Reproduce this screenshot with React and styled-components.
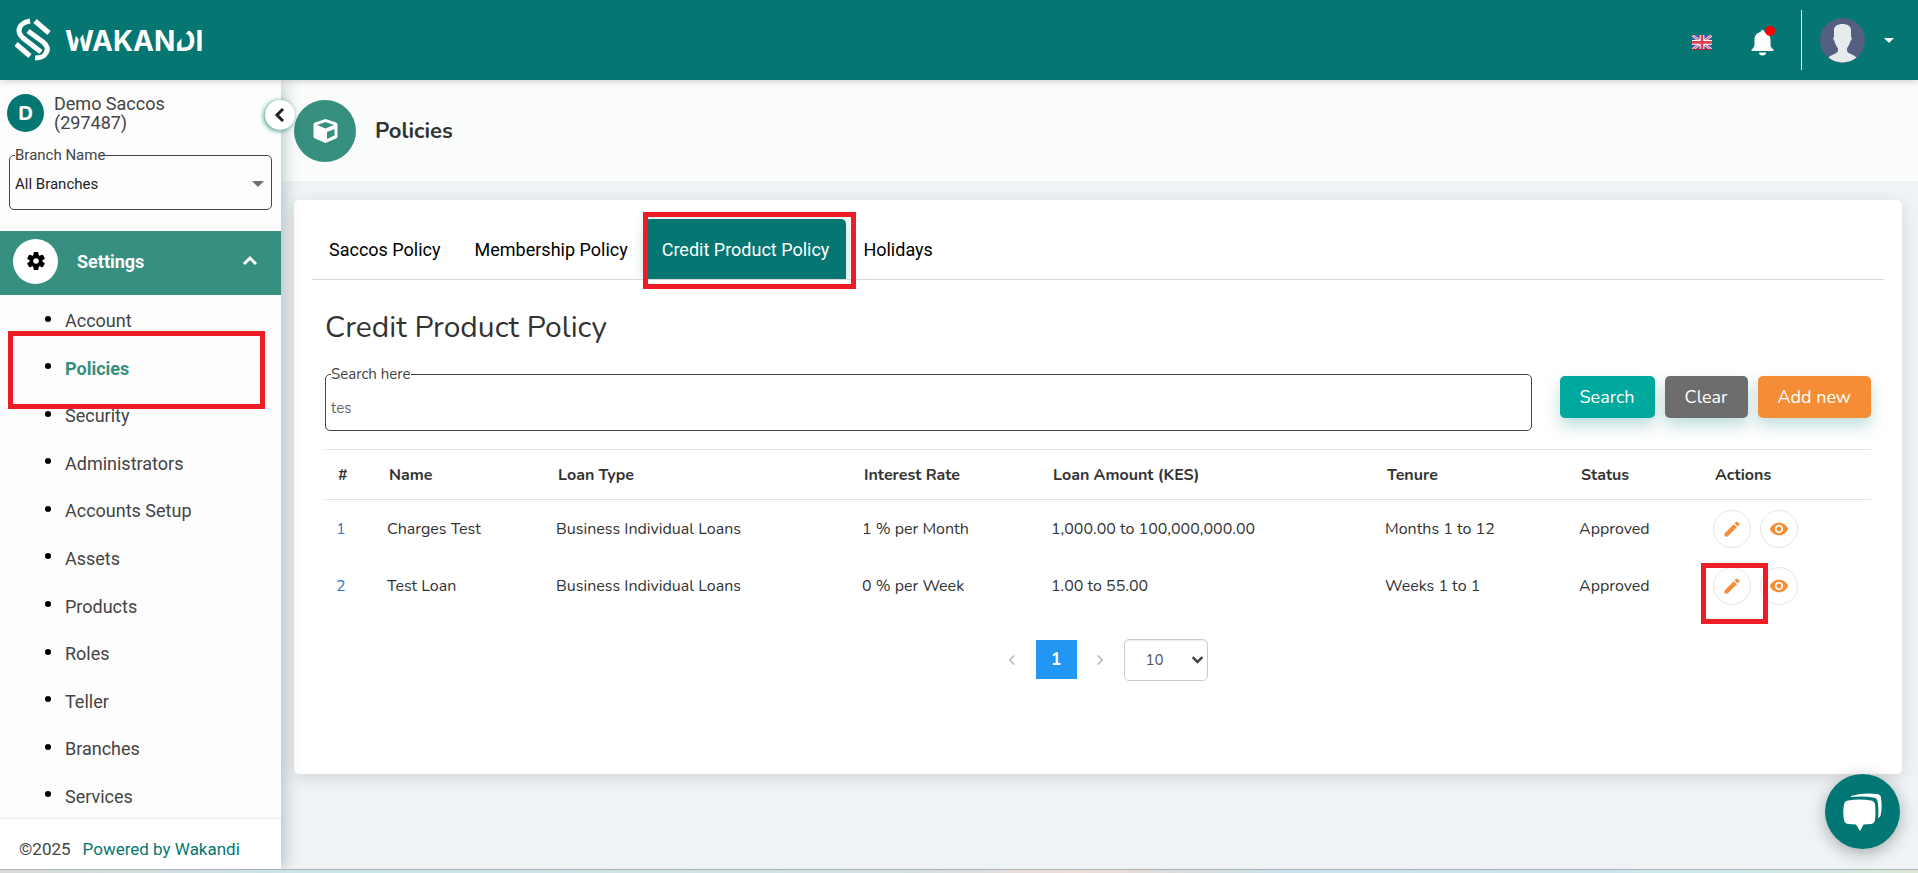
import React from "react";
import styled, { createGlobalStyle } from "styled-components";
import { MdEdit, MdVisibility } from "react-icons/md";

const vary = {
	teal: "#057672",
	green: "#368f7f",
	mint: "#00a99d",
	orange: "#f58c36",
	grey: "#6d6d6d",
	fontColor: "#333333",
	border: "#e4e4e4",
	red: "#ee1c25",
	nunito: `Nunito, "Open Sans", "Noto Sans", sans-serif`,
	roboto: `Roboto, sans-serif`,
};

const GlobalStyles = createGlobalStyle`
	*, *::before, *::after {
		box-sizing: border-box;
	}
	body {
		margin: 0;
		background-color: #eff3f6;
		color: ${vary.fontColor};
		font-family: ${vary.nunito};
		font-size: 16px;
	}
	a {
		text-decoration: none;
	}
	button, input, select {
		font-family: inherit;
	}
`;

const Page = styled.div`
	display: grid;
	grid-template-rows: 80px 1fr 4px;
	min-height: 100vh;
`;

const Header = styled.header`
	display: flex;
	align-items: center;
	padding: 0 20px 0 15px;
	background-color: ${vary.teal};
	box-shadow: 0 1px 8px rgba(0, 0, 0, 0.2);
	z-index: 3;
`;
const LogoLink = styled.a`
	display: flex;
	margin-right: auto;
`;
const FlagButton = styled.button`
	display: flex;
	padding: 0;
	margin: 5px 39px 0 0;
	border: none;
	background: none;
`;
const BellButton = styled(FlagButton)`
	position: relative;
	margin: 6px 27px 0 0;
`;
const BellDot = styled.span`
	position: absolute;
	top: -4px;
	right: -1px;
	width: 10px;
	height: 10px;
	border-radius: 50%;
	background-color: #ff0000;
`;
const UserButton = styled.button`
	display: flex;
	align-items: center;
	gap: 19px;
	height: 60px;
	padding: 0 5px 0 18px;
	border: none;
	border-left: 1px solid #ffffff;
	background: none;
`;

const Body = styled.div`
	display: flex;
	min-height: 0;
`;

const Sidebar = styled.aside`
	position: relative;
	display: flex;
	flex-direction: column;
	flex: 0 0 281px;
	background-color: #fdfdfd;
	box-shadow: 2px 0 16px rgba(0, 40, 50, 0.28);
	font-family: ${vary.roboto};
	z-index: 2;
`;
const CollapseButton = styled.button`
	position: absolute;
	top: 20px;
	right: -14px;
	display: flex;
	align-items: center;
	justify-content: center;
	width: 30px;
	height: 30px;
	padding: 0;
	border: none;
	border-radius: 50%;
	background-color: #ffffff;
	box-shadow: -1px 1px 5px ${vary.green};
`;
const Account = styled.div`
	display: flex;
	align-items: center;
	gap: 10px;
	padding: 14px 7px 0;
`;
const AccountBadge = styled.span`
	display: flex;
	align-items: center;
	justify-content: center;
	width: 37px;
	height: 38px;
	padding-top: 2px;
	border-radius: 50%;
	background-color: ${vary.teal};
	color: #ffffff;
	font-family: ${vary.nunito};
	font-size: 19px;
	font-weight: 800;
`;
const AccountName = styled.p`
	width: 130px;
	margin: 0;
	color: #444444;
	font-size: 18px;
	line-height: 19px;
`;

const Fieldset = styled.fieldset`
	margin: 0;
	padding: 0 5px;
	border: 1px solid #444444;
	border-radius: 5px;
`;
const Legend = styled.legend`
	padding: 0;
	color: #444444;
	font-size: 15px;
	line-height: 18px;
`;
const BranchField = styled(Fieldset)`
	height: 64px;
	margin: 14px 9px 21px;
`;
const BranchSelectWrap = styled.div`
	display: flex;
	align-items: center;
	padding-right: 2px;
`;
const BranchSelect = styled.select`
	flex: 1;
	padding: 11px 0;
	border: none;
	background: none;
	color: #222222;
	font-size: 15px;
	line-height: 18px;
	appearance: none;
`;

const MenuTitle = styled.button`
	display: flex;
	align-items: center;
	height: 64px;
	padding: 0 23px 4px 13px;
	border: none;
	background-color: ${vary.green};
	color: #ffffff;
	font-size: 18px;
	font-weight: 700;
`;
const MenuIcon = styled.span`
	display: flex;
	align-items: center;
	justify-content: center;
	width: 45px;
	height: 45px;
	margin-right: 19px;
	border-radius: 50%;
	background-color: #ffffff;
`;
const MenuText = styled.span`
	flex: 1;
	text-align: left;
`;
const MenuList = styled.ul`
	position: relative;
	display: grid;
	flex: 1;
	grid-auto-rows: 1fr;
	margin: 0;
	padding: 0;
	list-style: none;
`;
const MenuItem = styled.li`
	display: flex;
	align-items: center;
	padding-left: 45px;

	&::before {
		content: "";
		width: 6px;
		height: 6px;
		border-radius: 50%;
		background-color: #000000;
	}
`;
const MenuLink = styled.a`
	padding: 4px 0 0 14px;
	color: ${(props) => (props.$active ? vary.green : "#444444")};
	font-size: 18px;
	font-weight: ${(props) => (props.$active ? 700 : 400)};
`;
const SideFooter = styled.footer`
	display: flex;
	align-items: center;
	gap: 12px;
	height: 51px;
	padding: 10px 19px 0;
	border-top: 1px solid #ececec;
	background-color: #ffffff;
	color: #444444;
	font-size: 17px;
`;
const FooterLink = styled.a`
	color: ${vary.teal};
`;

const Main = styled.main`
	flex: 1;
	min-width: 0;
`;
const TitleBar = styled.div`
	display: flex;
	align-items: center;
	gap: 19px;
	height: 101px;
	padding: 0 13px;
	background-color: #fbfdfc;
`;
const TitleIcon = styled.span`
	display: flex;
	align-items: center;
	justify-content: center;
	width: 62px;
	height: 62px;
	border-radius: 50%;
	background-color: ${vary.green};
`;
const Title = styled.h1`
	margin: 0;
	font-size: 22px;
	font-weight: 700;
`;

const Card = styled.section`
	min-height: 574px;
	margin: 19px 17px 0 13px;
	padding: 19px 18px;
	border-radius: 5px;
	background-color: #ffffff;
	box-shadow: 0 4px 16px rgba(0, 0, 0, 0.12);
`;
const Tabs = styled.nav`
	display: flex;
	height: 61px;
	border-bottom: 1px solid #d8d8d8;
`;
const TabItem = styled.div`
	position: relative;
	display: flex;
`;
const Tab = styled.a`
	display: flex;
	align-items: center;
	padding: 0 17px;
	border-radius: 5px 5px 0 0;
	background-color: ${(props) => (props.$active ? vary.teal : "transparent")};
	box-shadow: ${(props) =>
		props.$active ? "0 4px 12px rgba(5, 118, 114, 0.3)" : "none"};
	clip-path: inset(-20px -20px 0);
	color: ${(props) => (props.$active ? "#ffffff" : "#000000")};
	font-family: ${vary.roboto};
	font-size: 18px;
`;

const Content = styled.div`
	padding: 30px 13px 0;
`;
const Heading = styled.h2`
	margin: 0;
	font-size: 30px;
	font-weight: 400;
	line-height: 36px;
`;
const SearchRow = styled.form`
	display: flex;
	gap: 28px;
	margin-top: 19px;
`;
const SearchField = styled(Fieldset)`
	flex: 1;
	height: 66px;
`;
const SearchInput = styled.input`
	width: 100%;
	padding: 16px 0;
	border: none;
	outline: none;
	background: none;
	color: #666666;
	font-size: 15px;
	line-height: 18px;
`;
const Buttons = styled.div`
	display: flex;
	gap: 10px;
	padding-top: 11px;
`;
const Button = styled.button`
	height: 42px;
	padding: 0 20px;
	border: none;
	border-radius: 5px;
	background-color: ${(props) => vary[props.$color]};
	box-shadow: 0 8px 16px rgba(5, 118, 114, 0.25);
	color: #ffffff;
	font-size: 18px;
`;

const Table = styled.table`
	width: 100%;
	margin-top: 18px;
	border-collapse: collapse;
	table-layout: fixed;
	text-align: left;
`;
const Th = styled.th`
	width: ${(props) => props.$width}px;
	height: 50px;
	padding: 0 13px;
	border-top: 1px solid ${vary.border};
	border-bottom: 1px solid ${vary.border};
	font-size: 16px;
	font-weight: 700;
	white-space: nowrap;
`;
const Td = styled.td`
	height: 57px;
	padding: 2px 11px 0;
	font-size: 16px;
	white-space: nowrap;
`;
const RowLink = styled.a`
	color: #337ab7;
`;
const Actions = styled.div`
	display: flex;
	gap: 9px;
`;
const ActionItem = styled.div`
	position: relative;
	display: flex;
`;
const IconButton = styled.button`
	display: flex;
	align-items: center;
	justify-content: center;
	width: 38px;
	height: 38px;
	padding: 0;
	border: 1px solid #e6e6e6;
	border-radius: 50%;
	background-color: #ffffff;
	color: ${vary.orange};
`;

const Pagination = styled.div`
	display: flex;
	align-items: center;
	justify-content: center;
	margin-top: 25px;
`;
const PageArrow = styled.button`
	display: flex;
	justify-content: center;
	width: 47px;
	padding: 0;
	border: none;
	background: none;
`;
const PageNumber = styled.button`
	width: 41px;
	height: 39px;
	border: none;
	background-color: #2196f3;
	color: #ffffff;
	font-size: 17px;
	font-weight: 700;
`;
const PageSizeWrap = styled.div`
	position: relative;
	display: flex;
	align-items: center;

	& > svg {
		position: absolute;
		right: 4px;
		pointer-events: none;
	}
`;
const PageSize = styled.select`
	width: 84px;
	height: 42px;
	padding: 0 0 0 21px;
	border: 1px solid #cccccc;
	border-radius: 5px;
	background-color: #ffffff;
	box-shadow: inset 0 1px 1px rgba(0, 0, 0, 0.08);
	color: #555555;
	font-size: 15px;
	appearance: none;
`;

const ChatButton = styled.button`
	position: fixed;
	right: 18px;
	bottom: 24px;
	display: flex;
	align-items: center;
	justify-content: center;
	width: 75px;
	height: 75px;
	padding: 0;
	border: none;
	border-radius: 50%;
	background-color: #007774;
	box-shadow: 0 4px 16px rgba(0, 0, 0, 0.3);
	z-index: 4;
`;

const BottomStrip = styled.div`
	border-top: 1px solid #aab2b4;
	background: linear-gradient(
		90deg,
		#d9d9d9 0%,
		#c8e6ea 18%,
		#d5dfe2 48%,
		#efdcd8 56%,
		#dddcdc 61%,
		#c9e2ec 67%,
		#cbe8ec 90%,
		#dbe7d6 100%
	);
	z-index: 3;
`;

const Highlight = styled.div`
	position: absolute;
	border: 5px solid ${vary.red};
	pointer-events: none;
	z-index: 1;
`;
const MenuHighlight = styled(Highlight)`
	top: 36px;
	left: 8px;
	width: 257px;
	height: 78px;
`;
const TabHighlight = styled(Highlight)`
	inset: -7px -10px -10px -2px;
`;
const ActionHighlight = styled(Highlight)`
	inset: -4px -17px -19px -12px;
`;

const WordMark = styled.text`
	fill: #ffffff;
	font-family: Inter, sans-serif;
	font-size: 28px;
	font-weight: 700;
`;

const Logo = () => (
	<svg width="195" height="44" viewBox="0 0 195 44">
		<g fill="none" stroke="#ffffff" strokeWidth="5">
			<path d="M15 3 C8 4 4 8 4 13 C4 16 6 18 8 20 L26 34" />
			<path d="M20 3 L34 15" />
			<path d="M13 13 L28 24 C33 28 33 32 31 35 C29 39 26 40 20 40" />
			<path d="M1 26 L15 38" />
		</g>
		<WordMark x="50" y="33">
			WAKANDI
		</WordMark>
		<g fill={vary.teal}>
			<path d="M57 12h14l-7 10z" />
			<path d="M160 12h14l-15 17z" />
		</g>
	</svg>
);

const Flag = () => (
	<svg width="20" height="15" viewBox="0 0 60 45">
		<path fill="#3f56a8" d="M0 0h60v45H0z" />
		<path stroke="#e3dcec" strokeWidth="8" d="M0 0l60 45M60 0L0 45" />
		<path stroke="#d84a5c" strokeWidth="3" d="M0 0l60 45M60 0L0 45" />
		<path stroke="#ffffff" strokeWidth="14" d="M30 0v45M0 22h60" />
		<path stroke="#e0434f" strokeWidth="8" d="M30 0v45M0 22h60" />
		<path fill="#b3262e" d="M0 42h60v3H0z" />
	</svg>
);

const Bell = () => (
	<svg width="23" height="26" viewBox="0 0 23 26" fill="#ffffff">
		<path d="M11.500 0a2 2 0 0 0-2 2C5 3 3.500 6.500 3.500 10v4c0 3-1 4-3 5.500V21h22v-1.500c-2-1.500-3-2.500-3-5.500v-4c0-3.500-1.500-7-6-8a2 2 0 0 0-2-2z" />
		<path d="M8 22.500h7a3.500 3 0 0 1-7 0z" />
	</svg>
);

const Avatar = () => (
	<svg width="45" height="45" viewBox="0 0 45 45">
		<circle cx="22.500" cy="22.500" r="22.500" fill="#555f82" />
		<path
			fill="#e6ecec"
			d="M14 12c0-4 4-6 8.500-6s8.500 2 8.500 6v7c1 0 1 3-.5 4-1 4-3 6-3.500 7.500v2c0 3 7 4 9.500 7A22.500 22.500 0 0 1 8.500 39.500c3-3 9.500-4 9.500-7v-2c-1-2-3-3.500-3.500-7.500-1.500-1-1.500-4-.5-4z"
		/>
	</svg>
);

const Caret = ({ width, height, color }) => (
	<svg width={width} height={height} viewBox="0 0 10 5" preserveAspectRatio="none">
		<path d="M0 0h10L5 5z" fill={color} />
	</svg>
);

const Chevron = ({ size, color, turn, stroke = 3 }) => (
	<svg width={size} height={size} viewBox="0 0 16 16" fill="none">
		<path
			d="M11 2L5 8l6 6"
			stroke={color}
			strokeWidth={stroke}
			transform={`rotate(${turn} 8 8)`}
		/>
	</svg>
);

const Gear = () => (
	<svg width="18" height="18" viewBox="0 0 18 18">
		<g fill="#000000">
			<circle cx="9" cy="9" r="6.500" />
			<rect x="6.500" y="0" width="5" height="18" rx="1" />
			<rect x="6.500" y="0" width="5" height="18" rx="1" transform="rotate(60 9 9)" />
			<rect x="6.500" y="0" width="5" height="18" rx="1" transform="rotate(120 9 9)" />
		</g>
		<circle cx="9" cy="9" r="2.800" fill="#ffffff" />
	</svg>
);

const Cube = () => (
	<svg width="25" height="24" viewBox="0 0 25 24">
		<path
			fill="#ffffff"
			d="M12.500 0L23 3.500q1.500.5 1.500 2v12q0 1.500-1.500 2L12.500 24 2 19.500Q.5 19 .5 17.500v-12q0-1.500 1.500-2z"
		/>
		<path
			fill={vary.green}
			d="M12.500 3L21 6l-8.500 3.500L4 6zM14 13l7.500-3v6.500L14 20z"
		/>
	</svg>
);

const Chat = () => (
	<svg width="39" height="38" viewBox="0 0 39 38" fill="#ffffff">
		<path d="M5 7.500Q16 5.500 28 7.500q3.500.5 4 4 1 8 0 15.500-.5 3.500-4 4l-7.500.5L17 38l-4-6.500L5 31q-3.500-.5-4-4-1.500-8 0-15.500.5-3.500 4-4z" />
		<path d="M8 3Q20-.5 34 1q4 .5 4 4 1.500 10-.5 18l-2.500 2.500Q36 15 34.500 8q-.5-3-4-3.500Q20 3 8 4z" />
	</svg>
);

const App = () => {
	return (
		<>
			<GlobalStyles />
			<Page>
				<Header>
					<LogoLink href="#">
						<Logo />
					</LogoLink>
					<FlagButton aria-label="Language">
						<Flag />
					</FlagButton>
					<BellButton aria-label="Notifications">
						<Bell />
						<BellDot />
					</BellButton>
					<UserButton aria-label="Profile">
						<Avatar />
						<Caret width={10} height={5} color="#ffffff" />
					</UserButton>
				</Header>
				<Body>
					<Sidebar>
						<CollapseButton aria-label="Collapse menu">
							<Chevron size={16} color="#222222" turn={0} />
						</CollapseButton>
						<Account>
							<AccountBadge>D</AccountBadge>
							<AccountName>Demo Saccos (297487)</AccountName>
						</Account>
						<BranchField>
							<Legend>
								<label htmlFor="branch">Branch Name</label>
							</Legend>
							<BranchSelectWrap>
								<BranchSelect id="branch">
									<option>All Branches</option>
								</BranchSelect>
								<Caret width={12} height={6} color="#6f6f6f" />
							</BranchSelectWrap>
						</BranchField>
						<MenuTitle>
							<MenuIcon>
								<Gear />
							</MenuIcon>
							<MenuText>Settings</MenuText>
							<Chevron size={16} color="#ffffff" turn={90} />
						</MenuTitle>
						<MenuList>
							{menu.map((label) => (
								<MenuItem key={label}>
									<MenuLink href="#" $active={label === "Policies"}>
										{label}
									</MenuLink>
								</MenuItem>
							))}
							<MenuHighlight as="li" aria-hidden="true" />
						</MenuList>
						<SideFooter>
							<span>©2025</span>
							<FooterLink href="#">Powered by Wakandi</FooterLink>
						</SideFooter>
					</Sidebar>
					<Main>
						<TitleBar>
							<TitleIcon>
								<Cube />
							</TitleIcon>
							<Title>Policies</Title>
						</TitleBar>
						<Card>
							<Tabs>
								{tabs.map(({ label, active }) => (
									<TabItem key={label}>
										<Tab href="#" $active={active}>
											{label}
										</Tab>
										{active && <TabHighlight />}
									</TabItem>
								))}
							</Tabs>
							<Content>
								<Heading>Credit Product Policy</Heading>
								<SearchRow>
									<SearchField>
										<Legend>
											<label htmlFor="search">Search here</label>
										</Legend>
										<SearchInput id="search" type="text" defaultValue="tes" />
									</SearchField>
									<Buttons>
										<Button type="button" $color="mint">
											Search
										</Button>
										<Button type="button" $color="grey">
											Clear
										</Button>
										<Button type="button" $color="orange">
											Add new
										</Button>
									</Buttons>
								</SearchRow>
								<Table>
									<thead>
										<tr>
											{columns.map(({ label, width }) => (
												<Th key={label} $width={width}>
													{label}
												</Th>
											))}
										</tr>
									</thead>
									<tbody>
										{policies.map((row) => (
											<tr key={row.id}>
												<Td>
													<RowLink href="#">{row.id}</RowLink>
												</Td>
												<Td>{row.name}</Td>
												<Td>{row.type}</Td>
												<Td>{row.rate}</Td>
												<Td>{row.amount}</Td>
												<Td>{row.tenure}</Td>
												<Td>{row.status}</Td>
												<Td>
													<Actions>
														<ActionItem>
															<IconButton aria-label="Edit">
																<MdEdit size={20} />
															</IconButton>
															{row.highlighted && <ActionHighlight />}
														</ActionItem>
														<ActionItem>
															<IconButton aria-label="View">
																<MdVisibility size={20} />
															</IconButton>
														</ActionItem>
													</Actions>
												</Td>
											</tr>
										))}
									</tbody>
								</Table>
								<Pagination>
									<PageArrow aria-label="Previous page">
										<Chevron size={12} color="#b5b5b5" turn={0} stroke={2} />
									</PageArrow>
									<PageNumber>1</PageNumber>
									<PageArrow aria-label="Next page">
										<Chevron size={12} color="#b5b5b5" turn={180} stroke={2} />
									</PageArrow>
									<PageSizeWrap>
										<PageSize aria-label="Rows per page">
											<option>10</option>
										</PageSize>
										<Chevron size={13} color="#444444" turn={270} />
									</PageSizeWrap>
								</Pagination>
							</Content>
						</Card>
					</Main>
				</Body>
				<BottomStrip />
				<ChatButton aria-label="Chat">
					<Chat />
				</ChatButton>
			</Page>
		</>
	);
};

const menu = [
	"Account",
	"Policies",
	"Security",
	"Administrators",
	"Accounts Setup",
	"Assets",
	"Products",
	"Roles",
	"Teller",
	"Branches",
	"Services",
];
const tabs = [
	{ label: "Saccos Policy" },
	{ label: "Membership Policy" },
	{ label: "Credit Product Policy", active: true },
	{ label: "Holidays" },
];
const columns = [
	{ label: "#", width: 51 },
	{ label: "Name", width: 169 },
	{ label: "Loan Type", width: 306 },
	{ label: "Interest Rate", width: 189 },
	{ label: "Loan Amount (KES)", width: 334 },
	{ label: "Tenure", width: 194 },
	{ label: "Status", width: 134 },
	{ label: "Actions", width: 169 },
];
const policies = [
	{
		id: 1,
		name: "Charges Test",
		type: "Business Individual Loans",
		rate: "1 % per Month",
		amount: "1,000.00 to 100,000,000.00",
		tenure: "Months 1 to 12",
		status: "Approved",
	},
	{
		id: 2,
		name: "Test Loan",
		type: "Business Individual Loans",
		rate: "0 % per Week",
		amount: "1.00 to 55.00",
		tenure: "Weeks 1 to 1",
		status: "Approved",
		highlighted: true,
	},
];

export default App;
